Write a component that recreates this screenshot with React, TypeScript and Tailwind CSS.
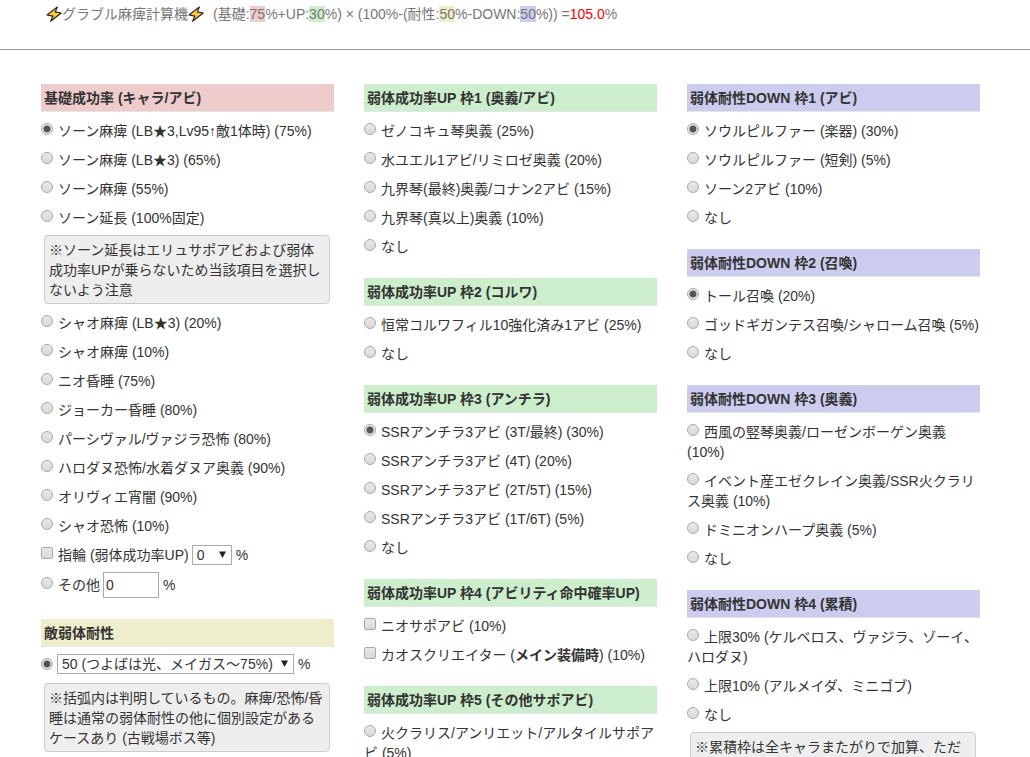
import type { ReactNode } from "react";

type Item = { label: ReactNode; checked?: boolean; type?: "radio" | "checkbox" };

const radioClass =
  "inline-block h-[12px] w-[12px] appearance-none rounded-full border border-[#a9a9a9] bg-linear-to-b from-[#e9e9e9] to-[#d9d9d9] align-[1px] checked:bg-[radial-gradient(circle,#555_0,#555_3px,#e6e6e6_4px)]";
const checkboxClass =
  "inline-block h-[12px] w-[12px] appearance-none rounded-[2px] border border-[#a9a9a9] bg-linear-to-b from-[#e9e9e9] to-[#d9d9d9] align-[1px] checked:bg-[#555]";

function Choice({ name, label, checked, type = "radio" }: Item & { name: string }) {
  return (
    <label className="mt-[9px] block">
      <input
        type={type}
        name={name}
        defaultChecked={checked}
        className={type === "radio" ? radioClass : checkboxClass}
      />
      <span className="ml-[5px]">{label}</span>
    </label>
  );
}

function Group({ title, color, children }: { title: string; color: string; children: ReactNode }) {
  return (
    <section>
      <h2 className={`border-b border-[#e5e5e5] px-[3px] pt-1 pb-[3px] font-bold ${color}`}>{title}</h2>
      {children}
    </section>
  );
}

function Choices({ name, items }: { name: string; items: Item[] }) {
  return (
    <>
      {items.map((item, i) => (
        <Choice key={i} name={name} {...item} />
      ))}
    </>
  );
}

function Note({ children }: { children: ReactNode }) {
  return (
    <p className="mt-[7px] mr-1 ml-[3px] rounded-[4px] border border-[#ccc] bg-[#eee] px-1 pt-1 pb-[3px]">
      {children}
    </p>
  );
}

function Dropdown({ id, label, options, width }: { id: string; label: string; options: string[]; width: string }) {
  return (
    <span className={`relative flex ${width}`}>
      <select
        id={id}
        aria-label={label}
        className="h-5 w-full appearance-none border border-[#a9a9a9] bg-white pl-1 leading-[18px]"
      >
        {options.map((o) => (
          <option key={o}>{o}</option>
        ))}
      </select>
      <svg viewBox="0 0 7 7" className="pointer-events-none absolute top-[6px] right-[6px] h-[7px] w-[7px]">
        <path d="M0 0.5h7L3.5 7z" fill="#222" />
      </svg>
    </span>
  );
}

function Bolt() {
  return (
    <svg viewBox="0 0 16 16" className="inline-block h-4 w-4 align-[-3px]" aria-hidden="true">
      <path
        d="M11.4 0.9 1 9l5.9 1.1L4.6 15.2 15.2 7 9.3 5.9z"
        fill="#ffc83d"
        stroke="#1d1d1d"
        strokeWidth="1.1"
        strokeLinejoin="round"
      />
    </svg>
  );
}

const red = "bg-[#eecccc]";
const green = "bg-[#cceecc]";
const yellow = "bg-[#eeeecc]";
const blue = "bg-[#ccccee]";

export default function App() {
  return (
    <div className="h-screen overflow-hidden bg-white font-['Liberation_Sans','Noto_Sans_CJK_JP',sans-serif] text-[14px] leading-5 text-[#333]">
      <header className="border-b border-[#999] pt-1 pb-[25px] pl-[46px] text-[#777]">
        <h1>
          <Bolt />
          グラブル麻痺計算機
          <Bolt />
          <span className="ml-[9px]">
            (基礎:<span className={red}>75</span>%+UP:<span className={green}>30</span>%) × (100%-(耐性:
            <span className={yellow}>50</span>%-DOWN:<span className={blue}>50</span>%)) =
            <span className="text-[#f00]">105.0</span>%
          </span>
        </h1>
      </header>
      <main className="grid grid-cols-3 gap-[30px] pt-[34px] pr-[50px] pl-[41px]">
        <div className="flex flex-col gap-[21px]">
          <Group title="基礎成功率 (キャラ/アビ)" color={red}>
            <Choices
              name="base"
              items={[
                { label: "ソーン麻痺 (LB★3,Lv95↑敵1体時) (75%)", checked: true },
                { label: "ソーン麻痺 (LB★3) (65%)" },
                { label: "ソーン麻痺 (55%)" },
                { label: "ソーン延長 (100%固定)" },
              ]}
            />
            <Note>※ソーン延長はエリュサポアビおよび弱体成功率UPが乗らないため当該項目を選択しないよう注意</Note>
            <Choices
              name="base"
              items={[
                { label: "シャオ麻痺 (LB★3) (20%)" },
                { label: "シャオ麻痺 (10%)" },
                { label: "ニオ昏睡 (75%)" },
                { label: "ジョーカー昏睡 (80%)" },
                { label: "パーシヴァル/ヴァジラ恐怖 (80%)" },
                { label: "ハロダヌ恐怖/水着ダヌア奥義 (90%)" },
                { label: "オリヴィエ宵闇 (90%)" },
                { label: "シャオ恐怖 (10%)" },
              ]}
            />
            <div className="flex items-end gap-[3px]">
              <Choice name="ring" type="checkbox" label="指輪 (弱体成功率UP)" />
              <Dropdown id="ring-value" label="指輪の値" options={["0", "1", "2", "3", "4", "5"]} width="w-10" />
              <span className="pl-px">%</span>
            </div>
            <div className="mt-[7px] flex items-center gap-[3px]">
              <label>
                <input type="radio" name="base" className={radioClass} />
                <span className="ml-[5px]">その他</span>
              </label>
              <input
                type="text"
                aria-label="その他の値"
                defaultValue="0"
                className="h-[26px] w-14 border border-[#a9a9a9] px-[2px]"
              />
              <span className="pl-px">%</span>
            </div>
          </Group>
          <Group title="敵弱体耐性" color={yellow}>
            <div className="mt-[7px] mb-[9px] flex items-center gap-1">
              <input type="radio" name="resist" aria-label="敵弱体耐性" defaultChecked className={radioClass} />
              <Dropdown
                id="resist-value"
                label="敵弱体耐性の値"
                options={["50 (つよばは光、メイガス〜75%)"]}
                width="w-[237px]"
              />
              <span>%</span>
            </div>
            <Note>
              ※括弧内は判明しているもの。麻痺/恐怖/昏睡は通常の弱体耐性の他に個別設定があるケースあり (古戦場ボス等)
            </Note>
          </Group>
        </div>
        <div className="flex flex-col gap-[21px]">
          <Group title="弱体成功率UP 枠1 (奥義/アビ)" color={green}>
            <Choices
              name="up1"
              items={[
                { label: "ゼノコキュ琴奥義 (25%)" },
                { label: "水ユエル1アビ/リミロゼ奥義 (20%)" },
                { label: "九界琴(最終)奥義/コナン2アビ (15%)" },
                { label: "九界琴(真以上)奥義 (10%)" },
                { label: "なし" },
              ]}
            />
          </Group>
          <Group title="弱体成功率UP 枠2 (コルワ)" color={green}>
            <Choices name="up2" items={[{ label: "恒常コルワフィル10強化済み1アビ (25%)" }, { label: "なし" }]} />
          </Group>
          <Group title="弱体成功率UP 枠3 (アンチラ)" color={green}>
            <Choices
              name="up3"
              items={[
                { label: "SSRアンチラ3アビ (3T/最終) (30%)", checked: true },
                { label: "SSRアンチラ3アビ (4T) (20%)" },
                { label: "SSRアンチラ3アビ (2T/5T) (15%)" },
                { label: "SSRアンチラ3アビ (1T/6T) (5%)" },
                { label: "なし" },
              ]}
            />
          </Group>
          <Group title="弱体成功率UP 枠4 (アビリティ命中確率UP)" color={green}>
            <Choices
              name="up4"
              items={[
                { label: "ニオサポアビ (10%)", type: "checkbox" },
                {
                  label: (
                    <>
                      カオスクリエイター (<b>メイン装備時</b>) (10%)
                    </>
                  ),
                  type: "checkbox",
                },
              ]}
            />
          </Group>
          <Group title="弱体成功率UP 枠5 (その他サポアビ)" color={green}>
            <Choices name="up5" items={[{ label: "火クラリス/アンリエット/アルタイルサポアビ (5%)" }]} />
          </Group>
        </div>
        <div className="flex flex-col gap-[21px]">
          <Group title="弱体耐性DOWN 枠1 (アビ)" color={blue}>
            <Choices
              name="down1"
              items={[
                { label: "ソウルピルファー (楽器) (30%)", checked: true },
                { label: "ソウルピルファー (短剣) (5%)" },
                { label: "ソーン2アビ (10%)" },
                { label: "なし" },
              ]}
            />
          </Group>
          <Group title="弱体耐性DOWN 枠2 (召喚)" color={blue}>
            <Choices
              name="down2"
              items={[
                { label: "トール召喚 (20%)", checked: true },
                { label: "ゴッドギガンテス召喚/シャローム召喚 (5%)" },
                { label: "なし" },
              ]}
            />
          </Group>
          <Group title="弱体耐性DOWN 枠3 (奥義)" color={blue}>
            <Choices
              name="down3"
              items={[
                { label: "西風の竪琴奥義/ローゼンボーゲン奥義 (10%)" },
                { label: "イベント産エゼクレイン奥義/SSR火クラリス奥義 (10%)" },
                { label: "ドミニオンハープ奥義 (5%)" },
                { label: "なし" },
              ]}
            />
          </Group>
          <Group title="弱体耐性DOWN 枠4 (累積)" color={blue}>
            <Choices
              name="down4"
              items={[
                { label: "上限30% (ケルベロス、ヴァジラ、ゾーイ、ハロダヌ)" },
                { label: "上限10% (アルメイダ、ミニゴブ)" },
                { label: "なし" },
              ]}
            />
            <Note>※累積枠は全キャラまたがりで加算、ただ</Note>
          </Group>
        </div>
      </main>
    </div>
  );
}
